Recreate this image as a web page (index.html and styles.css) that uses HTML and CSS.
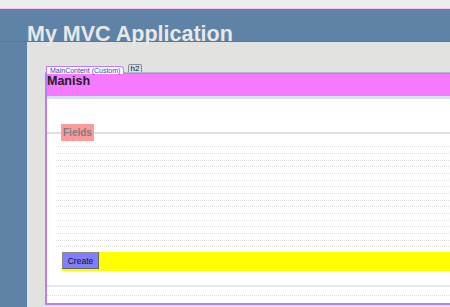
FILE: index.html
```html
<!DOCTYPE html>
<html lang="en">
<head>
  <meta charset="UTF-8" />
  <title>Create</title>
  <link rel="stylesheet" href="styles.css">
</head>
<body>

  <div class="topbar"></div>

  <div class="site">
    <header class="header">
      <h1>My MVC Application</h1>
    </header>

    <div class="main">
      <div class="content">
        <!-- designer tags -->
        <span class="tag tag-region">MainContent (Custom)</span>
        <span class="tag tag-element">h2</span>

        <h2 class="heading">Manish</h2>

        <fieldset class="fields">
          <legend>Fields</legend>

          <div class="field-list">
            <div class="field">
              <div class="editor-label"></div>
              <div class="editor-field"></div>
              <div class="field-note"></div>
            </div>
            <div class="field">
              <div class="editor-label"></div>
              <div class="editor-field"></div>
              <div class="field-note"></div>
            </div>
            <div class="field">
              <div class="editor-label"></div>
              <div class="editor-field"></div>
              <div class="field-note"></div>
            </div>
            <div class="field">
              <div class="editor-label"></div>
              <div class="editor-field"></div>
              <div class="field-note"></div>
            </div>
            <div class="field">
              <div class="editor-label"></div>
              <div class="editor-field"></div>
              <div class="field-note"></div>
            </div>
          </div>

          <p class="actions">
            <button type="button">Create</button>
          </p>
        </fieldset>

        <div class="back-link"></div>
      </div>
    </div>
  </div>

</body>
</html>
```

FILE: styles.css
```css
html, body {
  margin: 0;
  padding: 0;
  height: 100%;
  overflow: hidden;
}

body {
  font-family: "Liberation Sans", Arial, sans-serif;
  background: #e2e2e0;
}

.topbar {
  height: 8px;
  background: #ededed;
  border-bottom: 1px solid #f3c4f3;
}

.site {
  background: #5e83a6;
}

.header {
  height: 32px;
  border-bottom: 1px solid #56799b;
}

.header h1 {
  margin: 0;
  padding: 13px 0 0 27px;
  font-size: 21.5px;
  line-height: 24px;
  color: #e8e8e8;
  white-space: nowrap;
}

.main {
  margin-left: 27px;
  height: calc(100vh - 42px);
  box-sizing: border-box;
  padding: 31px 0 0 18px;
  background: #e2e2e0;
  overflow: hidden;
}

.content {
  position: relative;
  width: 520px;
  background: #fff;
  border-top: 1px solid #b97cff;
  border-left: 2px solid #b97cff;
  border-bottom: 2px solid #b97cff;
  box-shadow: 0 -1px 0 #a9bdcc;
}

/* designer tags */
.tag {
  position: absolute;
  box-sizing: border-box;
  height: 8px;
  line-height: 7px;
  white-space: nowrap;
}

.tag-region {
  left: -1px;
  top: -8px;
  padding: 0 3px;
  font-size: 7px;
  color: #2a3fd8;
  background: #fff;
  border: 1px solid #b97cff;
  border-bottom: 0;
  border-radius: 0 4px 0 0;
}

.tag-element {
  left: 81px;
  top: -10px;
  width: 14px;
  font-size: 8px;
  text-align: center;
  color: #111;
  background: #dedede;
  border: 1px solid #7d8fa3;
  border-bottom: 0;
  border-radius: 2px 2px 0 0;
}

.heading {
  margin: 0;
  height: 22px;
  font-size: 12.5px;
  line-height: 15px;
  color: #222;
  background: #f779ff;
  border-bottom: 3px solid #d5e3f1;
}

.fields {
  margin: 25px 0 0;
  padding: 5px 0 14px 9px;
  min-width: 0;
  border: 0;
  border-top: 2px solid #e0e0e0;
  border-bottom: 2px solid #e8e8e8;
}

.fields legend {
  margin-left: 5px;
  padding: 2px;
  font-size: 10px;
  font-weight: bold;
  line-height: 13px;
  color: #7c7c7c;
  background: #ff9a9a;
}

.field-list {
  border-bottom: 1px dotted #dedede;
}

.editor-label,
.editor-field,
.field-note {
  border-top: 1px dotted #dedede;
}

.editor-label,
.editor-field {
  height: 6px;
}

.field-note {
  height: 5px;
}

.actions {
  margin: 5px 0 0 6px;
  height: 19px;
  background: #ff0;
}

.actions button {
  display: block;
  width: 37px;
  height: 17px;
  padding: 0;
  font-family: "Liberation Sans", Arial, sans-serif;
  font-size: 8.5px;
  color: #111;
  background: #7f7fff;
  border: 1px solid #8c8c8c;
  border-right-color: #666;
  border-bottom-color: #666;
}

.back-link {
  margin-top: 8px;
  height: 7px;
  border-top: 1px dotted #dedede;
}
```
